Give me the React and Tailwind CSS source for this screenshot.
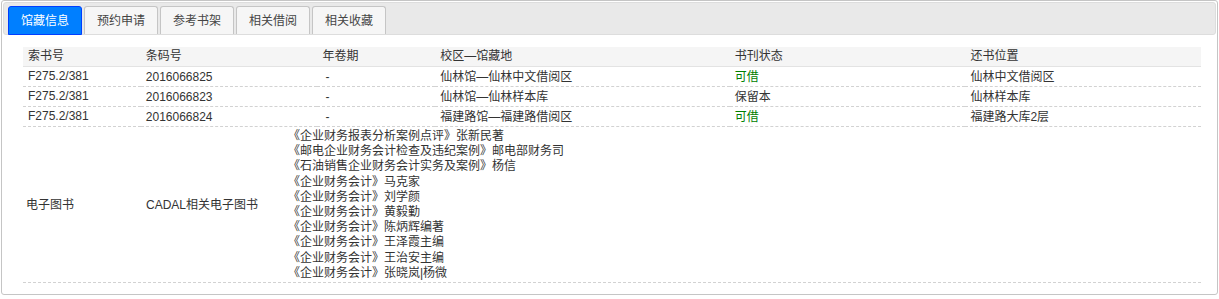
const tabs = ['馆藏信息', '预约申请', '参考书架', '相关借阅', '相关收藏'];

const holdings = [
  { call: 'F275.2/381', barcode: '2016066825', vol: '-', place: '仙林馆—仙林中文借阅区', status: '可借', ok: true, back: '仙林中文借阅区' },
  { call: 'F275.2/381', barcode: '2016066823', vol: '-', place: '仙林馆—仙林样本库', status: '保留本', ok: false, back: '仙林样本库' },
  { call: 'F275.2/381', barcode: '2016066824', vol: '-', place: '福建路馆—福建路借阅区', status: '可借', ok: true, back: '福建路大库2层' },
];

const ebooks = [
  '《企业财务报表分析案例点评》张新民著',
  '《邮电企业财务会计检查及违纪案例》邮电部财务司',
  '《石油销售企业财务会计实务及案例》杨信',
  '《企业财务会计》马克家',
  '《企业财务会计》刘学颜',
  '《企业财务会计》黄毅勤',
  '《企业财务会计》陈炳辉编著',
  '《企业财务会计》王泽霞主编',
  '《企业财务会计》王治安主编',
  '《企业财务会计》张晓岚|杨微',
];

export default function App() {
  return (
    <div className="w-[1219px] h-[299px] bg-white pl-px font-['Liberation_Sans','Noto_Sans_CJK_SC',sans-serif] text-[12px] text-[#333]">
      <div className="w-[1217px] h-[295px] border border-[#c5c5c5] rounded-[3px] p-[1px]">
        {/* tab bar */}
        <div className="h-[33px] border border-[#dddddd] bg-[#e9e9e9] rounded-[3px] pt-[3px] pl-[4px] flex gap-[2px]">
          {tabs.map((t, i) => (
            <div
              key={t}
              className={
                i === 0
                  ? 'w-[74px] h-[29px] -mb-px flex items-center justify-center rounded-t-[3px] border border-[#003eff] bg-[#007fff] text-white text-[12px]'
                  : 'w-[74px] h-[28px] flex items-center justify-center rounded-t-[3px] border border-[#c5c5c5] border-b-0 bg-[#f6f6f6] text-[#454545] text-[12px]'
              }
            >
              {t}
            </div>
          ))}
        </div>

        <div className="ml-[20px] mt-[12px] w-[1178px]">
          <table className="w-full table-fixed border-collapse">
            <colgroup>
              <col className="w-[10%]" />
              <col className="w-[15%]" />
              <col className="w-[10%]" />
              <col className="w-[25%]" />
              <col className="w-[20%]" />
              <col className="w-[20%]" />
            </colgroup>
            <thead>
              <tr className="bg-[#f5f5f5] border-b border-[#e3e3e3]">
                {['索书号', '条码号', '年卷期', '校区—馆藏地', '书刊状态', '还书位置'].map((h) => (
                  <th key={h} className="h-[19px] pl-[5px] text-left font-normal leading-[19px]">{h}</th>
                ))}
              </tr>
            </thead>
            <tbody>
              {holdings.map((r) => (
                <tr key={r.barcode} className="border-b border-dashed border-[#d2d2d2]">
                  <td className="h-[19px] pl-[5px] leading-[19px]">{r.call}</td>
                  <td className="pl-[5px]">{r.barcode}</td>
                  <td className="pl-[8px]">{r.vol}</td>
                  <td className="pl-[5px]">{r.place}</td>
                  <td className={r.ok ? 'pl-[5px] text-[#008000]' : 'pl-[5px]'}>{r.status}</td>
                  <td className="pl-[5px]">{r.back}</td>
                </tr>
              ))}
            </tbody>
          </table>

          <div className="grid grid-cols-[118px_142px_1fr] items-center border-b border-dashed border-[#d2d2d2] pt-[2px] pb-[1px]">
            <div className="pl-[3px]">电子图书</div>
            <div className="pl-[5px]">CADAL相关电子图书</div>
            <div className="pl-[5px] leading-[15.2px]">
              {ebooks.map((b) => (
                <div key={b}>{b}</div>
              ))}
            </div>
          </div>
        </div>
      </div>
    </div>
  );
}
